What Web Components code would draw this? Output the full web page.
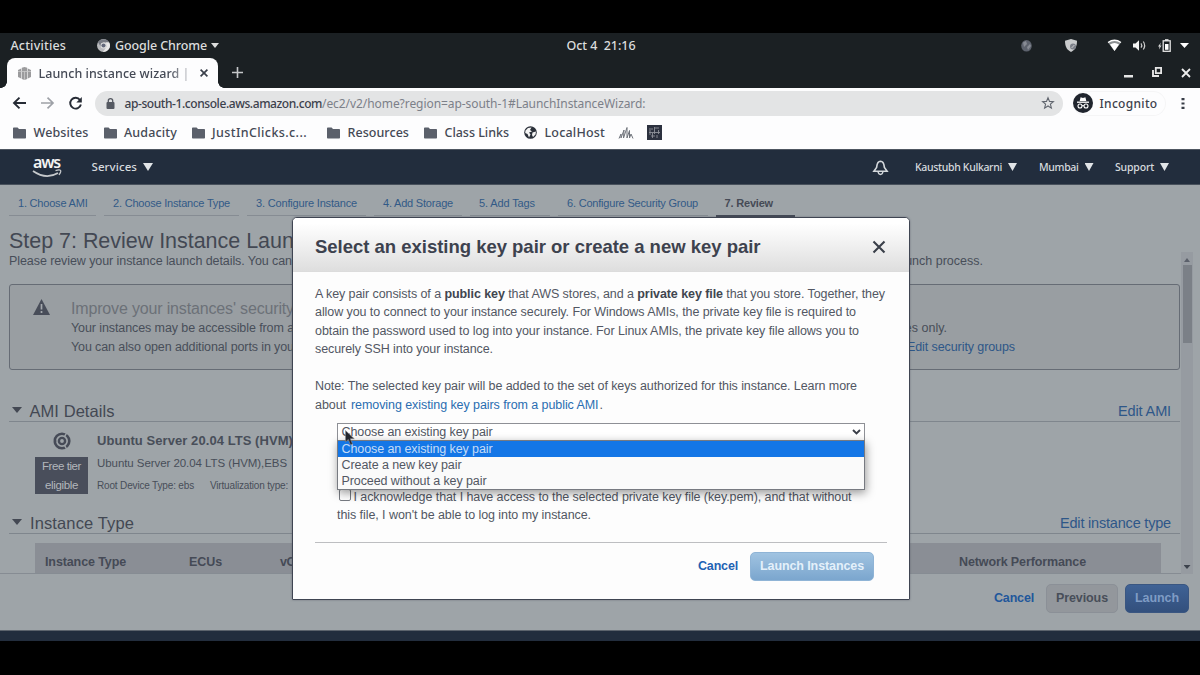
<!DOCTYPE html>
<html lang="en"><head><meta charset="utf-8"><title>Launch instance wizard</title>
<style>
html,body{margin:0;background:#000;overflow:hidden}
</style></head><body>
<desktop-screen></desktop-screen>
<script>
// Registers an element whose shadow root is filled from a template string.
function define(name, markup, after) {
  const tpl = document.createElement('template');
  tpl.innerHTML = '<style>*{box-sizing:border-box}svg{display:block;flex:none;overflow:visible}:host{box-sizing:border-box}</style>' + markup;
  customElements.define(name, class extends HTMLElement {
    constructor() {
      super();
      this.attachShadow({mode: 'open'}).appendChild(tpl.content.cloneNode(true));
    }
    connectedCallback() { if (after) after(this); }
  });
}

// One line of text; "w" tracks the letters out or in to that width, "m" is the gap before it.
define('t-x', `<style>:host{display:block;flex:none;white-space:pre}</style><slot></slot>`, el => {
  if (el.hasAttribute('m')) el.style.marginLeft = el.getAttribute('m') + 'px';
  if (!el.hasAttribute('w')) return;
  const w = +el.getAttribute('w');
  const r = document.createRange();
  r.selectNodeContents(el);
  const n = el.textContent.length;
  const nat = r.getBoundingClientRect().width;
  el.style.letterSpacing = ((w - nat) / n) + 'px';
  el.style.width = w + 'px';
});

define('caret-down', `<style>:host{display:block;flex:none;width:var(--w,9px);height:var(--h,5px);background:currentColor;clip-path:polygon(0 0,100% 0,50% 100%)}</style>`);

define('gnome-bar', `<style>
:host{display:flex;align-items:center;height:25px;background:#1b2023;color:#dcdddd;font:500 12.5px "Noto Sans",sans-serif}
</style>
<t-x m="10.5" w="55.5">Activities</t-x>
<svg style="margin-left:31px" width="13" height="13" viewBox="0 0 13 13"><circle cx="6.5" cy="6.5" r="6.5" fill="#b9babd"/><path d="M1 3.3A6.5 6.5 0 0 1 12 3.3H6.5L3.6 7.6Z" fill="#777b84"/><path d="M6 13 9.6 7.8 9 3.5H12.2A6.5 6.5 0 0 1 6 13Z" fill="#e8e8e8"/><circle cx="6.5" cy="6.5" r="2.9" fill="#e4e4e4"/><circle cx="6.5" cy="6.5" r="2.1" fill="#62687a"/></svg>
<t-x m="5" w="92">Google Chrome</t-x><caret-down style="margin-left:4px;--w:8px"></caret-down>
<t-x m="347.5" w="69">Oct 4  21:16</t-x>
<svg style="margin-left:385.5px" width="11" height="12" viewBox="0 0 11 12"><ellipse cx="5.5" cy="5.8" rx="5.3" ry="5.8" fill="#5d626d"/><path d="M2 2.5 5 1l1 3-3 3ZM6 7l3-3 1 2-3 4Z" fill="#878b94"/></svg>
<svg style="margin-left:33px" width="12" height="13" viewBox="0 0 12 13"><path d="M6 0 12 1.8C12 7 10.5 11 6 13 1.500 11 0 7 0 1.800Z" fill="#c9cbcc"/><circle cx="8" cy="7.500" r="3" fill="#7d818a"/><path d="M6.600 9 9.400 6" stroke="#ccc"/></svg>
<svg style="margin-left:31px" width="13" height="11" viewBox="0 0 13 11"><path d="M0 2.500Q6.500-2 13 2.500L6.500 11Z" fill="#8d9193"/><path d="M2 4.500Q6.500 1.500 11 4.500L6.500 11Z" fill="#fff"/><path d="M0 2.500Q6.500-2 13 2.500" fill="none" stroke="#fff" stroke-width="1.300"/></svg>
<svg style="margin-left:12px" width="14" height="11" viewBox="0 0 14 11"><path d="M0 3.500H2.500L6 .3V10.700L2.500 7.500H0Z" fill="#f4f4f4"/><path d="M8 3.300Q9.600 5.500 8 7.700M10.300 1.500Q13 5.500 10.300 9.500" fill="none" stroke="#ccc" stroke-width="1.200"/></svg>
<svg style="margin-left:11px" width="13" height="13" viewBox="0 0 13 13"><path d="M3 3.500 0 7.500H1.500L1 10.500 3.500 6.500H2Z" fill="#ddd"/><rect x="5.200" y="1.800" width="7" height="10.500" fill="none" stroke="#e4e4e4" stroke-width="1.300"/><rect x="7" y=".2" width="3.500" height="1.500" fill="#eee"/><rect x="7" y="5" width="3.500" height="5.800" fill="#fff"/></svg>
<caret-down style="margin-left:9px;color:#fff"></caret-down>`);

define('tab-strip', `<style>
:host{display:flex;height:30px;background:#1b2023;align-items:flex-start;padding-left:7px;position:relative}
.tab{width:211px;height:30px;background:#fdfdfe;border-radius:8px 8px 0 0;display:flex;align-items:center;padding-left:11px;color:#454a56;font:500 12.500px "Noto Sans",sans-serif;position:relative}
.tab:before,.tab:after{content:"";position:absolute;bottom:0;width:6px;height:6px}
.tab:before{left:-6px;background:radial-gradient(circle at 0 0,#0000 5.500px,#fdfdfe 6px)}
.tab:after{right:-6px;background:radial-gradient(circle at 100% 0,#0000 5.500px,#fdfdfe 6px)}
.clip{width:152px;margin-left:7.500px;-webkit-mask:linear-gradient(90deg,#000 130px,#0003)}
</style>
<div class="tab"><svg width="13" height="13" viewBox="0 0 13 13"><path d="M0 3 3.200 1.500V11.500L0 10ZM3.800.800 6.500 0 9.200.800V12L6.500 13 3.800 12ZM9.800 1.500 13 3V10L9.800 11.500Z" fill="#9b9b9d"/><path d="M0 4.500H13M6.500 4V13" stroke="#c9c9ca" stroke-width=".8"/></svg>
<div class="clip"><t-x w="151">Launch instance wizard |</t-x></div>
<svg style="margin-left:9.500px" width="8" height="8" viewBox="0 0 8 8"><path d="M.6.6 7.400 7.400M7.400.6.6 7.400" stroke="#3b404b" stroke-width="1.700"/></svg></div>
<svg style="margin:9px 0 0 14px" width="11" height="11" viewBox="0 0 11 11"><path d="M5.500 0V11M0 5.500H11" stroke="#c5c7c9" stroke-width="1.600"/></svg>
<svg style="margin:16.500px 0 0 881px" width="10" height="3"><rect width="9" height="2.500" fill="#e6e6e6"/></svg>
<svg style="margin:9px 0 0 18px" width="10" height="10" viewBox="0 0 10 10"><path d="M3.800.9H9.100V6.200H3.800Z" fill="none" stroke="#e6e6e6" stroke-width="1.800"/><path d="M1 3V9H7" fill="none" stroke="#e6e6e6" stroke-width="1.900"/></svg>
<svg style="margin:10.500px 0 0 20px" width="8" height="8" viewBox="0 0 8 8"><path d="M0 0 8 8M8 0 0 8" stroke="#eee" stroke-width="1.800"/></svg>`);

define('address-bar', `<style>
:host{display:flex;height:30px;background:#fdfdfe;align-items:center;padding-left:13px;font:500 12px "Noto Sans",sans-serif;color:#3c414c}
.box{margin-left:13px;width:968px;height:25px;border-radius:13px;background:#e3e4e5;display:flex;align-items:center;padding-left:11px}
.path{color:#7c8089;font-weight:400}
.inc{margin-left:10px;display:flex;align-items:center;height:25px;width:93px;border-radius:13px;box-shadow:inset 0 0 0 1px #f5f5f6}
</style>
<svg width="13" height="12" viewBox="0 0 13 12"><path d="M13 6H1M6.500.6 1 6 6.500 11.400" fill="none" stroke="#262b35" stroke-width="1.900"/></svg>
<svg style="margin-left:15px" width="13" height="12" viewBox="0 0 13 12"><path d="M0 6H12M6.500.6 12 6 6.500 11.400" fill="none" stroke="#9ea1a7" stroke-width="1.700"/></svg>
<svg style="margin-left:15px" width="13" height="13" viewBox="0 0 13 13"><path d="M11 3A5.400 5.400 0 1 0 11.900 7.500" fill="none" stroke="#262b35" stroke-width="1.900"/><path d="M12.800 0V5.500H7.300Z" fill="#262b35"/></svg>
<div class="box"><svg width="9" height="11" viewBox="0 0 9 11"><rect x=".5" y="4" width="8" height="7" rx="1" fill="#555962"/><path d="M2.300 4.500V2.800a2.200 2.200 0 0 1 4.400 0V4.500" fill="none" stroke="#555962" stroke-width="1.300"/></svg>
<t-x m="9.500" w="197.500">ap-south-1.console.aws.amazon.com</t-x><t-x class="path" w="323.500">/ec2/v2/home?region=ap-south-1#LaunchInstanceWizard:</t-x>
<svg style="margin-left:396px" width="12" height="12" viewBox="0 0 12 12"><path d="M6 .8 7.500 4.400 11.400 4.700 8.400 7.200 9.400 11.100 6 9 2.600 11.100 3.600 7.200.6 4.700 4.500 4.400Z" fill="none" stroke="#60656e" stroke-width="1.100"/></svg></div>
<div class="inc"><svg width="20" height="20" viewBox="0 0 20 20"><circle cx="10" cy="10" r="10" fill="#20252e"/><path d="M6.700 8 7.600 4.300 10 4.900 12.400 4.300 13.300 8Z" fill="#fff"/><path d="M4 9.200H16" stroke="#fff" stroke-width="1.300"/><circle cx="7" cy="13" r="2" fill="none" stroke="#fff" stroke-width="1.100"/><circle cx="13" cy="13" r="2" fill="none" stroke="#fff" stroke-width="1.100"/><path d="M9 12.700H11" stroke="#fff"/></svg><t-x m="6.500" w="58">Incognito</t-x></div>
<svg style="margin-left:15px" width="4" height="13" viewBox="0 0 4 13"><path d="M.5 1h3v2.200h-3ZM.5 5.400h3v2.200h-3ZM.5 9.800h3V12h-3Z" fill="#383d47"/></svg>`);

define('book-mark', `<style>:host{display:flex;align-items:center}</style>
<svg width="13" height="12" viewBox="0 0 13 12"><path d="M0 1.300Q0 .5.800.5H4.600L6 2H12.200Q13 2 13 2.800V10.700Q13 11.500 12.200 11.500H.8Q0 11.500 0 10.700Z" fill="#5b606b"/></svg><slot></slot>`);

define('bookmarks-bar', `<style>
:host{display:flex;height:31px;background:#fdfdfe;align-items:center;padding:0 0 2px 13px;font:500 12.500px "Noto Sans",sans-serif;color:#444955}
</style>
<book-mark><t-x m="7.500" w="55">Websites</t-x></book-mark>
<book-mark style="margin-left:15.500px"><t-x m="7" w="53">Audacity</t-x></book-mark>
<book-mark style="margin-left:15px"><t-x m="7" w="95">JustInClicks.c...</t-x></book-mark>
<book-mark style="margin-left:20px"><t-x m="7.500" w="61.500">Resources</t-x></book-mark>
<book-mark style="margin-left:15px"><t-x m="7.500" w="64.500">Class Links</t-x></book-mark>
<svg style="margin-left:15px" width="13" height="13" viewBox="0 0 13 13"><circle cx="6.500" cy="6.500" r="6.300" fill="#2b303a"/><path d="M1.500 4.500 4 2 7.500 1.500 6 4 8 5.500 5 6.500 6.500 8.500 5 11.500 3.500 8 1.200 7ZM8.500 6.500 12 5.500 11.500 8.500 9 11 8 9Z" fill="#f4f4f4"/></svg>
<t-x m="7.500" w="60.500">LocalHost</t-x>
<svg style="margin-left:14px" width="14" height="12" viewBox="0 0 14 12"><path d="M0 11.500 2 7 2 11 5 3 4.500 11 8 .5 8 11 10.500 3.500 10.500 11 12 7 14 11.500" fill="none" stroke="#6f737b" stroke-width="1"/></svg>
<svg style="margin-left:14px" width="15" height="15" viewBox="0 0 15 15"><rect width="15" height="15" fill="#2c313f"/><path d="M2 4H6M8 3H12M2 7.500H13M4 11H8M10 10V13M7.500 2V9M3 5V10M11.500 5V9M5.500 8V13" stroke="#8e919a" stroke-width=".9"/></svg>`);

define('aws-nav', `<style>
:host{display:flex;height:36px;background:#222d3d;align-items:center;padding-left:32px;color:#d6dade;font:500 11.500px "Noto Sans",sans-serif;border-top:1px solid #4e5661;border-bottom:1px solid #48515c}
.logo{width:30px;height:24px;color:#f3f3f3}
.logo t-x{font:600 16px/14px "Noto Sans",sans-serif;height:14px}
caret-down{--w:10px;--h:8px;color:#e1e4e7}
.sm{font-size:10.500px}
</style>
<div class="logo"><t-x m="1" w="27">aws</t-x><svg width="30" height="9" viewBox="0 0 30 9"><path d="M1 2Q14 11 26 4" fill="none" stroke="#c6c9cc" stroke-width="1.800"/><path d="M23.500 1.600Q27.500.4 28.500 1.400T27 6" fill="none" stroke="#c6c9cc" stroke-width="1.300"/></svg></div>
<t-x m="29.500" w="45.500" style="margin-top:-1px">Services</t-x><caret-down style="margin-left:6px"></caret-down>
<svg style="margin-left:720px" width="15" height="15" viewBox="0 0 15 15"><path d="M7.500 1.200C3.500 1.500 4 6 3.600 7.500L.9 11.300H14.100L11.400 7.500C11 6 11.500 1.500 7.500 1.200Z" fill="none" stroke="#d5d9dd" stroke-width="1.600"/><path d="M5 11.500Q5.500 14.500 7.500 14.500T10 11.500" fill="none" stroke="#d5d9dd" stroke-width="1.400"/></svg>
<t-x class="sm" m="27" w="87">Kaustubh Kulkarni</t-x><caret-down style="margin-left:6px;--w:9px"></caret-down>
<t-x class="sm" m="22" w="39.500">Mumbai</t-x><caret-down style="margin-left:6px;--w:9px"></caret-down>
<t-x class="sm" m="21.500" w="39">Support</t-x><caret-down style="margin-left:6px;--w:9px"></caret-down>`);

define('wizard-step', `<style>
:host{display:block;height:31px;margin-right:8px;padding:2px 0 0 9px;border-bottom:1px solid #868c93;line-height:32px;color:#325a87}
:host([active]){border-bottom:3px solid #444a56;height:33px;font-weight:bold;color:#464b56;padding-left:8.500px}
</style><slot></slot>`);

define('section-head', `<style>
:host{display:flex;align-items:center;margin-left:9px;width:1171px;height:24px;border-bottom:1px solid #7f868d;color:#434853;font-size:16.500px;padding:4px 0 0 3px}
caret-down{--w:10px;--h:6px;margin-top:-3px}
::slotted([slot=link]){color:#2e5788;font-size:14.500px;margin:-1px 9px 0 auto!important}
</style><caret-down></caret-down><slot></slot><slot name="link"></slot>`);

define('scroll-bar', `<style>
:host{display:flex;flex-direction:column;align-items:center;width:12px;height:322px;background:#969ba1;color:#5b606b}
.up{clip-path:polygon(50% 0,100% 100%,0 100%);background:currentColor;width:6px;height:4px;margin:6px 0 3px}
.thumb{width:9px;height:78px;background:#7b8087}
caret-down{--w:7px;--h:4px;margin:auto 0 5px;color:#3d434d}
</style><div class="up"></div><div class="thumb"></div><caret-down></caret-down>`);

define('review-page', `<style>
:host{display:block;height:446px;background:#9ea4a8;font-family:"Liberation Sans",sans-serif;color:#484e59;border-bottom:1px solid #5c636c}
.steps{display:flex;padding-left:9px;height:33px;font-size:11px}
.title{font-size:21.500px;line-height:24px;margin:11px 0 0 9px;color:#434853}
.main{display:flex;height:322px;margin-top:-1px}
.col{width:1181px;height:322px;overflow:hidden;border-bottom:1px solid #868c93}
.line{display:flex;justify-content:space-between}
.intro{font-size:12.500px;line-height:18px;margin-left:9px;width:974px}
.warn{margin:14px 0 0 9px;width:1171px;height:86px;border:1px solid #666c75;border-radius:3px;background:#999ea2;display:flex;padding:14px 0 0 23px}
.warn svg{margin-right:21px}
.wh{font-size:16px;line-height:20px;color:#6c7178}
.wt{font-size:12.500px;line-height:18.500px}
.link{color:#2e5788}
.ami{display:flex;padding-left:35px;height:79px}
.badge{width:53px;display:flex;flex-direction:column;align-items:center;padding-top:10px}
.free{margin-top:7px;width:53px;height:37px;background:#494e5b;color:#b3b7bc;font-size:11.500px;line-height:18.500px;padding-left:7px}
.inf{margin-left:9px}
.table{margin:9px 0 0 35px;width:1126px;height:32px;background:#8a8e95;display:flex;align-items:center;padding:5px 0 0 10px;font:bold 12.500px "Liberation Sans",sans-serif;color:#454a56}
.foot{display:flex;align-items:center;justify-content:flex-end;height:29px;margin:10px 11px 0 0;font:bold 12.500px "Liberation Sans",sans-serif}
.btn{height:29px;border-radius:5px;display:flex;align-items:center;justify-content:center;border:1px solid #8b9097;padding-bottom:1px}
</style>
<div class="steps">
<wizard-step style="width:87px"><t-x w="69.500">1. Choose AMI</t-x></wizard-step>
<wizard-step style="width:135px"><t-x w="117">2. Choose Instance Type</t-x></wizard-step>
<wizard-step style="width:119px"><t-x w="101">3. Configure Instance</t-x></wizard-step>
<wizard-step style="width:88px"><t-x w="70">4. Add Storage</t-x></wizard-step>
<wizard-step style="width:80px"><t-x w="56">5. Add Tags</t-x></wizard-step>
<wizard-step style="width:150px"><t-x w="131">6. Configure Security Group</t-x></wizard-step>
<wizard-step active style="width:79px"><t-x w="48.500">7. Review</t-x></wizard-step>
</div>
<div class="title"><t-x w="307.500">Step 7: Review Instance Launch</t-x></div>
<div class="main"><div class="col">
<div class="intro line"><t-x w="283">Please review your instance launch details. You can</t-x><t-x>launch process.</t-x></div>
<div class="warn"><svg width="17" height="16" viewBox="0 0 17 16"><path d="M8.500 0 17 16H0Z" fill="#484d59"/><path d="M8.500 5V10.500M8.500 12V14" stroke="#a4a8ac" stroke-width="1.700"/></svg>
<div><t-x class="wh" w="226">Improve your instances' security.</t-x>
<div class="wt line" style="width:876px"><t-x w="236">Your instances may be accessible from any</t-x><t-x>addresses only.</t-x></div>
<div class="wt line" style="width:944px"><t-x w="227">You can also open additional ports in your</t-x><t-x class="link" w="108">Edit security groups</t-x></div></div></div>
<section-head style="margin-top:28px"><t-x m="7.500" w="85">AMI Details</t-x><t-x slot="link" w="53">Edit AMI</t-x></section-head>
<div class="ami"><div class="badge"><svg width="18" height="18" viewBox="0 0 18 18"><circle cx="9" cy="9" r="7.300" fill="none" stroke="#464b57" stroke-width="2.600"/><circle cx="9" cy="9" r="3.100" fill="none" stroke="#464b57" stroke-width="2.400"/><path d="M0 9H4M13.500 1.200 11.500 4.700M13.500 16.800 11.500 13.300" stroke="#9ea4a8" stroke-width="1.400"/><circle cx="2" cy="9" r="1.500" fill="#464b57"/></svg>
<div class="free"><t-x w="39">Free tier</t-x><t-x m="3" w="33">eligible</t-x></div></div>
<div class="inf"><t-x w="196" style="font:bold 13px/18px 'Liberation Sans';margin-top:10px">Ubuntu Server 20.04 LTS (HVM)</t-x>
<t-x w="190" style="font-size:11.500px;line-height:18px;margin-top:4px">Ubuntu Server 20.04 LTS (HVM),EBS</t-x>
<div style="display:flex;font-size:10px;line-height:14px;margin-top:7px"><t-x w="97">Root Device Type: ebs</t-x><t-x m="16" w="78">Virtualization type:</t-x></div></div></div>
<section-head style="margin-top:9px"><t-x m="8" w="104">Instance Type</t-x><t-x slot="link" w="111">Edit instance type</t-x></section-head>
<div class="table"><t-x w="81">Instance Type</t-x><t-x m="63" w="33">ECUs</t-x><t-x m="58" w="38">vCPUs</t-x><t-x m="641" w="127">Network Performance</t-x></div>
</div><scroll-bar></scroll-bar></div>
<div class="foot"><t-x w="40" style="color:#22579b;margin-top:-1px">Cancel</t-x>
<div class="btn" style="margin-left:12px;width:72px;background:#93979c"><t-x w="52">Previous</t-x></div>
<div class="btn" style="margin-left:7px;width:64px;background:linear-gradient(#3f6295,#33507d);border-color:#3a5681;color:#7f9cc5"><t-x w="44">Launch</t-x></div></div>`);

define('key-select', `<style>
:host{display:block;position:relative;margin-left:22px;width:528px;height:18px;font-size:12.500px}
.box{height:18px;border:1px solid #8e9096;background:#fff;display:flex;align-items:center;justify-content:space-between;padding:0 3px 0 3.500px}
.list{position:absolute;z-index:2;top:17px;left:0;width:528px;height:50px;border:1px solid #777a81;background:#fafafa;box-shadow:1px 3px 9px #0006}
.list div{line-height:16px;height:16px;padding-left:3.500px}
.list .on{background:#1476e6;color:#c4dcf7;height:16px}
.cur{position:absolute;z-index:3;left:8px;top:7px}
</style>
<div class="box"><t-x w="151" style="margin-top:.500px">Choose an existing key pair</t-x><svg width="9" height="6" viewBox="0 0 9 6"><path d="M1 1 4.500 4.500 8 1" fill="none" stroke="#3a3e48" stroke-width="1.900"/></svg></div>
<div class="list"><div class="on"><t-x w="151">Choose an existing key pair</t-x></div><div><t-x w="120">Create a new key pair</t-x></div><div><t-x w="145">Proceed without a key pair</t-x></div></div>
<svg class="cur" width="10" height="16" viewBox="0 0 10 16"><path d="M.5.5V12L3.300 9.500 5.500 14.800 7.500 14 5.300 8.800H9.300Z" fill="#23262e" stroke="#8a8c92" stroke-width=".6"/></svg>`);

define('key-dialog', `<style>
:host{display:block;position:absolute;left:292px;top:217px;width:618px;height:383px;border:1px solid #3f4552;border-radius:5px 5px 1px 1px;background:#fdfdfd;font:12.500px/18.500px "Liberation Sans",sans-serif;color:#525763;box-shadow:0 0 2px #3f455288;overflow:hidden}
.h{height:54px;background:linear-gradient(#fff 10%,#dedede);border-bottom:1px solid #dcdcdc;display:flex;align-items:center;justify-content:space-between;padding:5px 24.500px 0 22px;font:bold 18.500px "Liberation Sans",sans-serif;color:#3d424e}
.b{padding:13px 0 0 22px}
b{color:#40454f}
.link{color:#2a6db1}
.row{display:flex}
.ck{width:12px;height:12px;border:1px solid #777b82;border-radius:2px;background:#fff;margin:1px 2.500px 0 24px}
.foot{display:flex;align-items:center;justify-content:flex-end;width:572px;margin-top:17px;padding:9px 13px 0 0;border-top:1px solid #bdbec1;font-weight:bold}
.btn{margin-left:12px;width:124px;height:29px;border-radius:5px;background:linear-gradient(#a0c3e1,#7ba6ce);border:1px solid #8fb4d6;color:#e4f0fa;display:flex;align-items:center;justify-content:center}
</style>
<div class="h"><t-x w="445.500">Select an existing key pair or create a new key pair</t-x><svg width="12" height="12" viewBox="0 0 12 12"><path d="M.5.5 11.500 11.500M11.500.5.500 11.500" stroke="#3a3f49" stroke-width="2.100"/></svg></div>
<div class="b"><t-x w="570">A key pair consists of a <b>public key</b> that AWS stores, and a <b>private key file</b> that you store. Together, they</t-x>
<t-x w="541" style="margin-top:-.5px">allow you to connect to your instance securely. For Windows AMIs, the private key file is required to</t-x>
<t-x w="544">obtain the password used to log into your instance. For Linux AMIs, the private key file allows you to</t-x>
<t-x w="178">securely SSH into your instance.</t-x>
<t-x w="542" style="margin-top:18.500px">Note: The selected key pair will be added to the set of keys authorized for this instance. Learn more</t-x>
<div class="row" style="margin-top:.5px"><t-x w="31">about</t-x><t-x class="link" m="5" w="247.500">removing existing key pairs from a public AMI</t-x><t-x m="1">.</t-x></div>
<key-select style="margin-top:8px"></key-select>
<div class="row" style="margin-top:47px"><span class="ck"></span><t-x w="498">I acknowledge that I have access to the selected private key file (key.pem), and that without</t-x></div>
<t-x m="22" w="254">this file, I won't be able to log into my instance.</t-x>
<div class="foot"><t-x w="40" style="color:#1f62b4">Cancel</t-x><div class="btn"><t-x w="104">Launch Instances</t-x></div></div></div>`);

define('desktop-screen', `<style>
:host{display:flex;flex-direction:column;position:relative;width:1200px;height:675px;padding-top:33px;background:#000}
.bottom{height:10px;background:#222d3d}
</style><gnome-bar></gnome-bar><tab-strip></tab-strip><address-bar></address-bar><bookmarks-bar></bookmarks-bar><aws-nav></aws-nav><review-page></review-page><div class="bottom"></div><key-dialog></key-dialog>`);
</script></body></html>
